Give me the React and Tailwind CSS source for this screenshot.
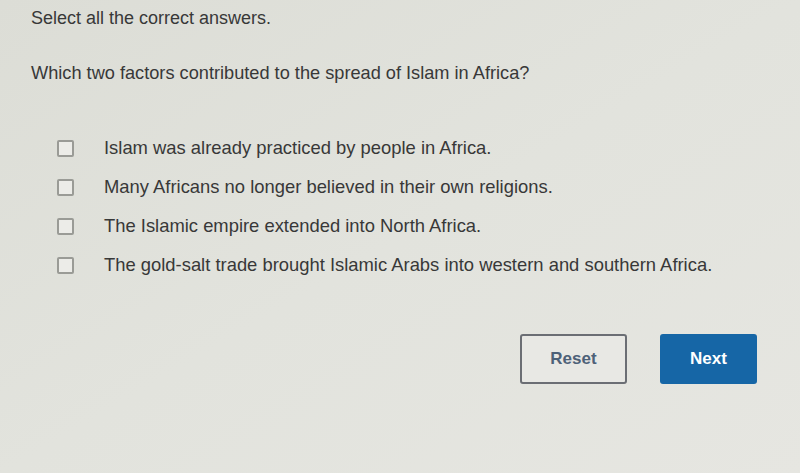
import React, { useState } from "react";

const options = [
  "Islam was already practiced by people in Africa.",
  "Many Africans no longer believed in their own religions.",
  "The Islamic empire extended into North Africa.",
  "The gold-salt trade brought Islamic Arabs into western and southern Africa.",
];

export default function App() {
  const [checked, setChecked] = useState([]);

  function toggle(index) {
    setChecked((prev) => (prev.includes(index) ? prev.filter((i) => i !== index) : [...prev, index]));
  }

  return (
    <div
      className="w-[800px] h-[473px] overflow-hidden bg-gradient-to-br from-[#dcddd6] via-[#e2e3dd] to-[#e6e6e1] text-[#383838] text-[18px]"
      style={{ fontFamily: '"Liberation Sans", Arial, sans-serif' }}
    >
      <div className="pl-[31px] pt-[7px]">
        <p className="leading-[22px]">Select all the correct answers.</p>
        <p className="mt-[33px] leading-[22px] text-[18.2px]">Which two factors contributed to the spread of Islam in Africa?</p>
      </div>

      <div className="mt-[53px] pl-[57px] flex flex-col gap-[17px]">
        {options.map((item, index) => (
          <label key={index} className="flex items-center h-[22px] cursor-pointer">
            <span
              className={`w-[17px] h-[17px] border-[2px] border-[#9a9b96] rounded-[2px] bg-[#ecece8] ${
                checked.includes(index) ? "bg-[#1a67a6] border-[#1a67a6]" : ""
              }`}
              onClick={() => toggle(index)}
            ></span>
            <span className="ml-[30px] leading-[22px] text-[18.4px]">{item}</span>
          </label>
        ))}
      </div>

      <div className="mt-[58px] flex justify-end pr-[43px] gap-[33px]">
        <button
          type="button"
          className="w-[107px] h-[50px] border-[2px] border-[#6b6e74] rounded-[3px] bg-[#e8e8e4] text-[#4d6178] font-bold text-[17px]"
          onClick={() => setChecked([])}
        >
          Reset
        </button>
        <button type="button" className="w-[97px] h-[50px] rounded-[3px] bg-[#1666a6] text-white font-bold text-[17px]">
          Next
        </button>
      </div>
    </div>
  );
}
